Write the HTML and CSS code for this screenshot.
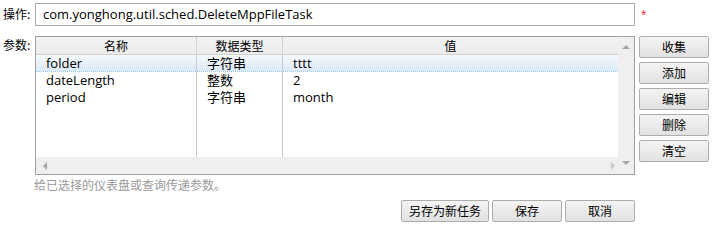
FILE: index.html
```html
<!DOCTYPE html>
<html lang="zh-CN">
<head>
<meta charset="utf-8">
<title>任务参数</title>
<link rel="stylesheet" href="styles.css">
</head>
<body>
<div class="page">
  <div class="row op-row">
    <label class="lbl">操作:</label>
    <div class="input">com.yonghong.util.sched.DeleteMppFileTask</div>
    <span class="star">*</span>
  </div>
  <div class="row param-row">
    <label class="lbl">参数:</label>
    <div class="grid-box">
      <div class="grid-main">
        <div class="grid-head">
          <div class="hcell">名称</div>
          <div class="hcell">数据类型</div>
          <div class="hcell last">值</div>
        </div>
        <div class="grid-body">
          <div class="grow selected">
            <div class="cell">folder</div>
            <div class="cell">字符串</div>
            <div class="cell last">tttt</div>
          </div>
          <div class="grow">
            <div class="cell">dateLength</div>
            <div class="cell">整数</div>
            <div class="cell last">2</div>
          </div>
          <div class="grow">
            <div class="cell">period</div>
            <div class="cell">字符串</div>
            <div class="cell last">month</div>
          </div>
          <div class="grow filler">
            <div class="cell"></div>
            <div class="cell"></div>
            <div class="cell last"></div>
          </div>
        </div>
        <div class="hscroll">
          <span class="arr arr-left"></span>
          <span class="arr arr-right"></span>
        </div>
      </div>
      <div class="vscroll">
        <span class="arr arr-up"></span>
        <span class="arr arr-down"></span>
      </div>
    </div>
    <div class="side-btns">
      <button class="btn">收集</button>
      <button class="btn">添加</button>
      <button class="btn">编辑</button>
      <button class="btn">删除</button>
      <button class="btn">清空</button>
    </div>
  </div>
  <div class="hint">给已选择的仪表盘或查询传递参数。</div>
  <div class="footer">
    <button class="btn wide">另存为新任务</button>
    <button class="btn">保存</button>
    <button class="btn">取消</button>
  </div>
</div>
</body>
</html>
```
FILE: styles.css
```css
html, body {
  margin: 0;
  padding: 0;
  background: #ffffff;
}
body {
  font-family: "Open Sans", "Noto Sans CJK SC", sans-serif;
  font-size: 12px;
  color: #000;
}
.page {
  width: 719px;
  height: 226px;
  padding-top: 3px;
  box-sizing: border-box;
}
.row {
  display: flex;
  align-items: flex-start;
}
.lbl {
  width: 35px;
  padding-left: 3px;
  box-sizing: border-box;
  font-family: "Noto Sans CJK SC", sans-serif;
  font-size: 12px;
  line-height: 17px;
}
.op-row .lbl {
  line-height: 22px;
}
.input {
  width: 600px;
  height: 23px;
  box-sizing: border-box;
  border: 1px solid #ababab;
  padding-left: 7px;
  font-size: 13px;
  line-height: 21px;
  white-space: nowrap;
}
.star {
  color: #ff2020;
  font-size: 10px;
  line-height: 10px;
  margin-left: 6px;
  margin-top: 6px;
}
.param-row {
  margin-top: 10px;
}
.grid-box {
  width: 600px;
  height: 139px;
  box-sizing: border-box;
  border: 1px solid #a0a0a0;
  display: flex;
}
.grid-main {
  flex: 1;
  display: flex;
  flex-direction: column;
  min-width: 0;
}
.grid-head, .grow {
  display: grid;
  grid-template-columns: 161px 86px 1fr;
}
.grid-head {
  height: 17px;
  background: linear-gradient(#f3f3f4, #ececed);
  border-bottom: 1px solid #d0d0d0;
}
.hcell {
  font-family: "Noto Sans CJK SC", sans-serif;
  text-align: center;
  line-height: 17px;
  border-right: 1px solid #d2d2d2;
}
.hcell.last, .cell.last {
  border-right: none;
}
.grid-body {
  flex: 1;
  display: flex;
  flex-direction: column;
}
.grow {
  height: 17px;
}
.grow.selected {
  background: linear-gradient(#f6f9fd, #dbe9f8);
  border-bottom: 1px dotted #9cc8ee;
  height: 16px;
}
.grow.filler {
  flex: 1;
}
.cell {
  padding-left: 10px;
  font-size: 13px;
  line-height: 17px;
  border-right: 1px solid #c9c9c9;
  white-space: nowrap;
}
.hscroll {
  height: 17px;
  background: #efefef;
  display: flex;
  align-items: center;
  justify-content: space-between;
  padding: 0 3px 0 7px;
}
.vscroll {
  width: 16px;
  background: #efefef;
  display: flex;
  flex-direction: column;
  align-items: center;
  justify-content: space-between;
  padding: 8px 0 9px;
  box-sizing: border-box;
}
.arr {
  display: block;
  width: 0;
  height: 0;
}
.arr-up {
  border-left: 4px solid transparent;
  border-right: 4px solid transparent;
  border-bottom: 4px solid #a6a6a6;
}
.arr-down {
  border-left: 4px solid transparent;
  border-right: 4px solid transparent;
  border-top: 4px solid #a6a6a6;
}
.arr-left {
  border-top: 4px solid transparent;
  border-bottom: 4px solid transparent;
  border-right: 4px solid #a6a6a6;
}
.arr-right {
  border-top: 4px solid transparent;
  border-bottom: 4px solid transparent;
  border-left: 4px solid #c8c8c8;
}
.side-btns {
  display: flex;
  flex-direction: column;
  gap: 4px;
  margin-left: 4px;
}
.btn {
  width: 70px;
  height: 22px;
  box-sizing: border-box;
  border: 1px solid #adadad;
  border-radius: 2px;
  background: linear-gradient(#f4f4f4, #e1e1e1);
  font-family: "Noto Sans CJK SC", sans-serif;
  font-size: 12px;
  color: #000;
  padding: 0;
  line-height: 20px;
}
.btn.wide {
  width: 88px;
}
.hint {
  margin-left: 34px;
  margin-top: 2px;
  color: #9a9a9a;
  font-family: "Noto Sans CJK SC", sans-serif;
  line-height: 16px;
}
.footer {
  display: flex;
  justify-content: flex-end;
  gap: 3px;
  width: 635px;
  margin-top: 7px;
}
```
